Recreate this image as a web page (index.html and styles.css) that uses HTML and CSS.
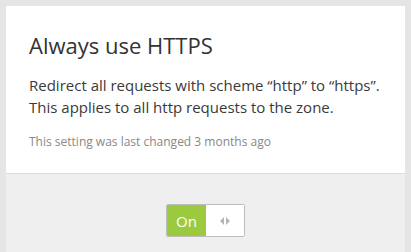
FILE: index.html
```html
<!DOCTYPE html>
<html>
<head>
<meta charset="utf-8">
<link rel="stylesheet" href="styles.css">
</head>
<body>
<div class="card">
  <div class="card-body">
    <h2 class="title">Always use HTTPS</h2>
    <p class="desc">Redirect all requests with scheme “http” to “https”. This applies to all http requests to the zone.</p>
    <p class="meta">This setting was last changed 3 months ago</p>
  </div>
  <div class="card-footer">
    <div class="toggle">
      <span class="toggle-on">On</span>
      <span class="toggle-handle">
        <svg width="10" height="8" viewBox="0 0 10 8"><path d="M4 0 L0 4 L4 8 Z" fill="#b5b5b5"/><path d="M6 0 L10 4 L6 8 Z" fill="#b5b5b5"/></svg>
      </span>
    </div>
  </div>
</div>
</body>
</html>
```
FILE: styles.css
```css
html, body {
  margin: 0;
  padding: 0;
}
body {
  background: #e5e5e5;
  font-family: "Open Sans", sans-serif;
  padding: 6px 6px 0 6px;
  height: 252px;
  box-sizing: border-box;
  overflow: hidden;
}
.card {
  background: #ffffff;
  height: 100%;
  display: flex;
  flex-direction: column;
}
.card-body {
  padding: 24px 23px 0 23px;
  height: 168px;
  box-sizing: border-box;
  border-bottom: 1px solid #dcdcdc;
}
.title {
  margin: 0;
  font-weight: 400;
  font-size: 22px;
  line-height: 30px;
  color: #333;
}
.desc {
  margin: 14px 0 0 0;
  font-size: 15px;
  line-height: 22px;
  color: #3a3a3a;
}
.meta {
  margin: 15px 0 0 0;
  font-size: 12px;
  line-height: 18px;
  color: #888;
}
.card-footer {
  flex: 1;
  background: #efefef;
  display: flex;
  justify-content: center;
  align-items: flex-start;
  padding-top: 30px;
}
.toggle {
  display: flex;
  height: 33px;
  box-sizing: border-box;
  border: 1px solid #bdbdbd;
  border-radius: 2px;
  overflow: hidden;
}
.toggle-on {
  width: 39px;
  background: #9bca3e;
  color: #fff;
  font-size: 15px;
  display: flex;
  align-items: center;
  justify-content: center;
}
.toggle-handle {
  width: 38px;
  background: #fff;
  display: flex;
  align-items: center;
  justify-content: center;
}
```
